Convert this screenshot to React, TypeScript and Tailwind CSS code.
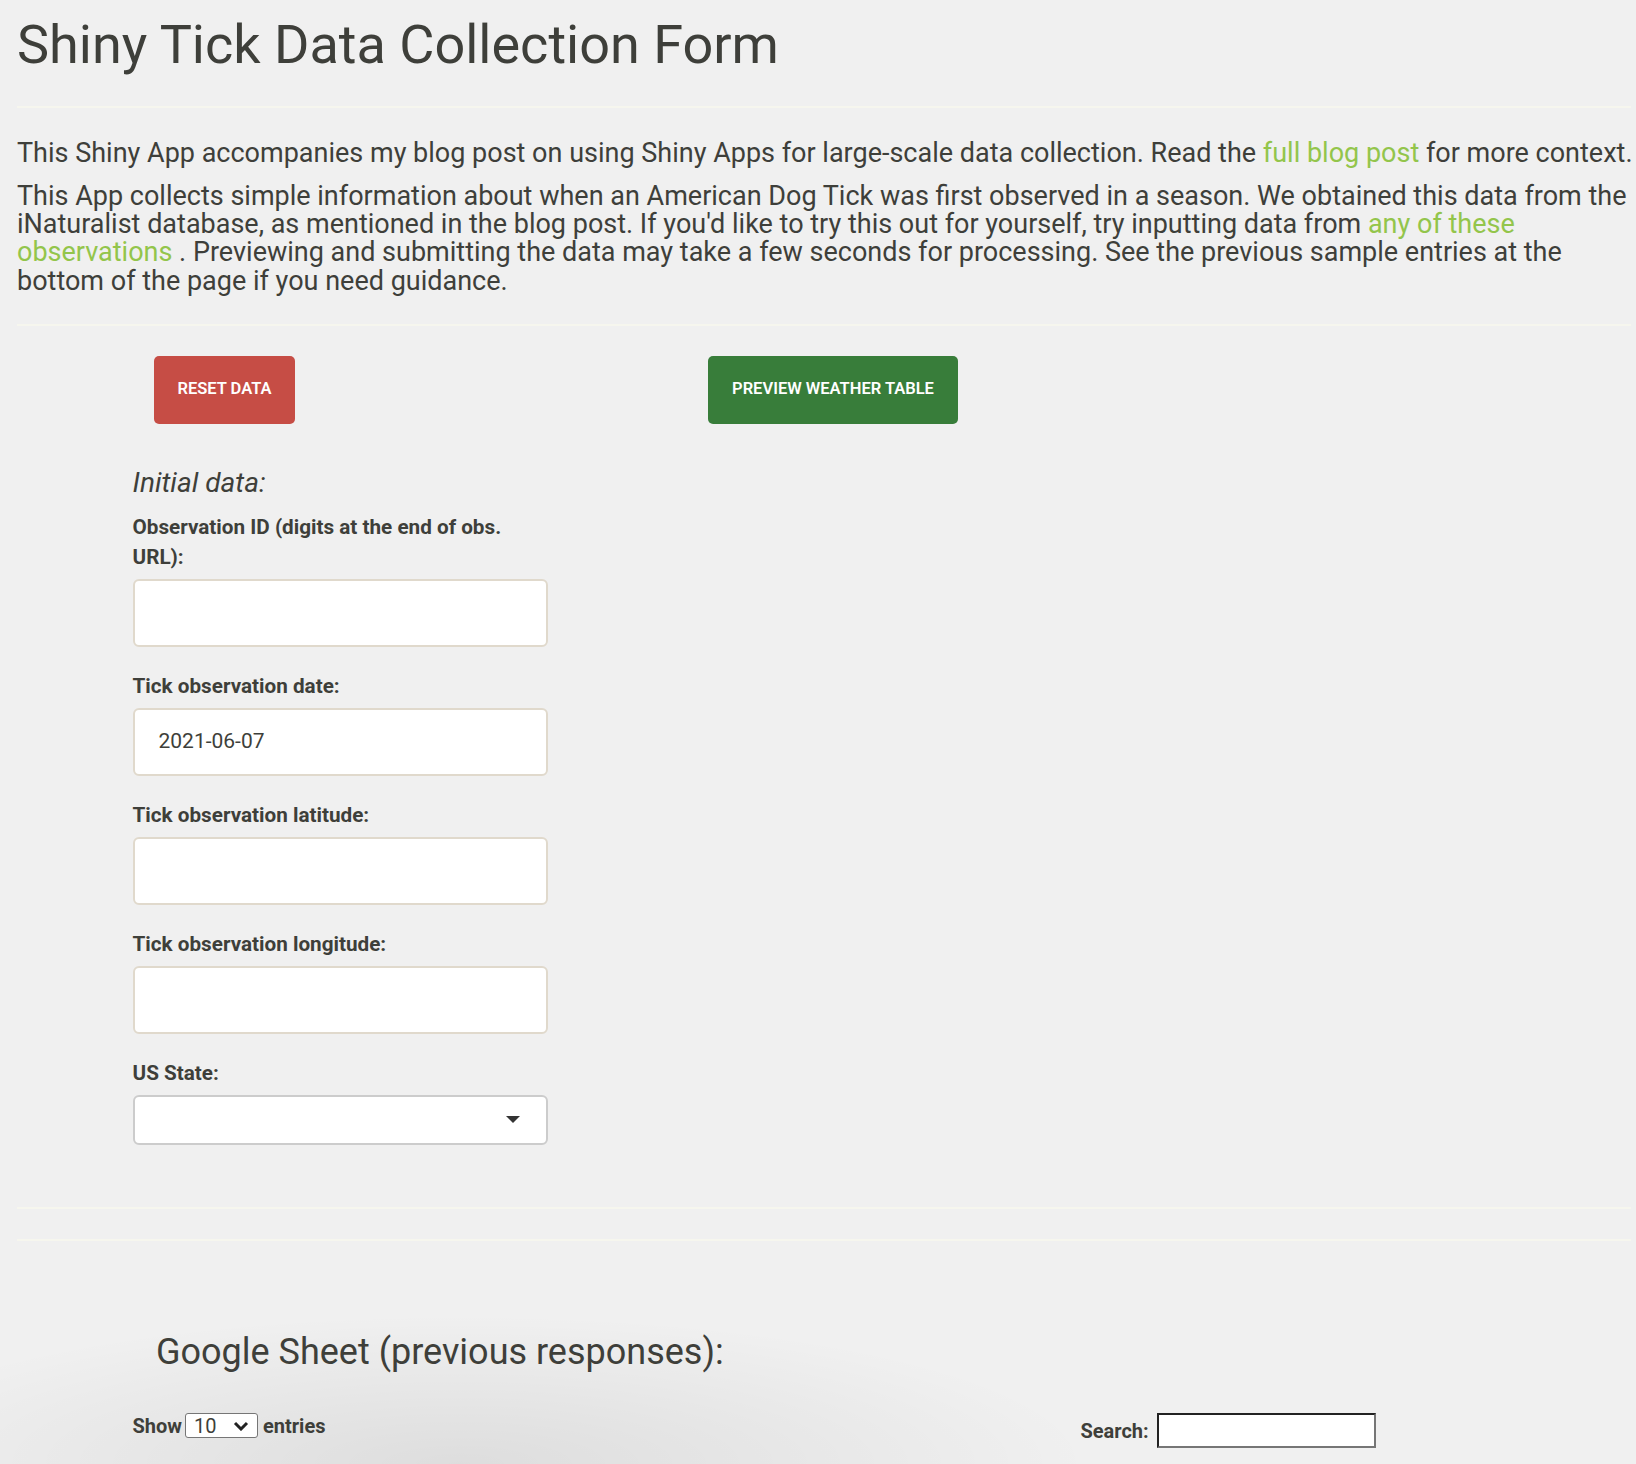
import React from "react";

function Field({ label, children }: { label: React.ReactNode; children: React.ReactNode }) {
  return (
    <div className="mb-[24px]">
      <div className="mb-[7px] text-[20.7px] font-bold leading-[30px]">{label}</div>
      {children}
    </div>
  );
}

function TextBox({ value }: { value?: string }) {
  return (
    <div className="flex h-[68px] w-[415px] items-center rounded-[6px] border-2 border-[#e0d9cc] bg-white pl-[24px] text-[21px] text-[#3e3f3a]">
      {value}
    </div>
  );
}

export default function App() {
  return (
    <div className="relative min-h-[1464px] overflow-hidden bg-[#f0f0f0] font-[Roboto,sans-serif] text-[#3e3f3a]">
      <div className="pointer-events-none absolute bottom-0 left-0 h-[150px] w-[1150px] bg-[radial-gradient(ellipse_55%_100%_at_40%_100%,rgba(0,0,0,0.08),rgba(0,0,0,0)_100%)]" />
      <div className="relative pl-[17px] pr-[5px] pt-[15px]">
        <h1 className="text-[54px] font-normal leading-[59.4px]">Shiny Tick Data Collection Form</h1>
        <div className="mt-[31.5px] h-[2px] bg-[#f6f6ee]" />

        <p className="mt-[30.6px] whitespace-nowrap text-[27px] leading-[28px]">
          This Shiny App accompanies my blog post on using Shiny Apps for large-scale data collection. Read the{" "}
          <span className="text-[#93c54b]">full blog post</span> for more context.
        </p>
        <p className="mt-[15.4px] text-[27px] leading-[28.3px]">
          This App collects simple information about when an American Dog Tick was first observed in a season. We
          obtained this data from the iNaturalist database, as mentioned in the blog post. If you'd like to try this out
          for yourself, try inputting data from <span className="text-[#93c54b]">any of these observations</span> .
          Previewing and submitting the data may take a few seconds for processing. See the previous sample entries at
          the bottom of the page if you need guidance.
        </p>
        <div className="mt-[28.5px] h-[2px] bg-[#f6f6ee]" />

        <div className="mt-[30px] flex">
          <div className="ml-[137px] flex h-[68px] w-[141px] items-center justify-center rounded-[5px] bg-[#c64d45] text-[16.5px] font-semibold uppercase text-white">
            Reset Data
          </div>
          <div className="ml-[413px] flex h-[68px] w-[250px] items-center justify-center rounded-[5px] bg-[#387d3a] text-[16.5px] font-semibold uppercase text-white">
            Preview Weather Table
          </div>
        </div>

        <div className="ml-[115.5px] w-[415px]">
          <h4 className="mt-[44.5px] text-[28px] italic leading-[30px]">Initial data:</h4>
          <div className="mt-[13.7px]">
            <Field label="Observation ID (digits at the end of obs. URL):">
              <TextBox />
            </Field>
            <Field label="Tick observation date:">
              <TextBox value="2021-06-07" />
            </Field>
            <Field label="Tick observation latitude:">
              <TextBox />
            </Field>
            <Field label="Tick observation longitude:">
              <TextBox />
            </Field>
            <div>
              <div className="mb-[7px] text-[20.7px] font-bold leading-[30px]">US State:</div>
              <div className="flex h-[50px] w-[415px] items-center justify-end rounded-[6px] border-2 border-[#cccccc] bg-white pr-[26px]">
                <svg width="14" height="7" viewBox="0 0 14 7">
                  <path d="M0 0 H14 L7 7 Z" fill="#333333" />
                </svg>
              </div>
            </div>
          </div>
        </div>

        <div className="mt-[62px] h-[2px] bg-[#f6f6ee]" />
        <div className="mt-[30px] h-[2px] bg-[#f6f6ee]" />

        <h3 className="ml-[139px] mt-[93px] text-[36px] font-normal leading-[37.4px]">Google Sheet (previous responses):</h3>

        <div className="ml-[115.5px] mt-[42px] flex items-start">
          <div className="flex h-[25px] items-center text-[20px] font-bold">
            <span>Show</span>
            <div className="ml-[3px] flex h-[25px] w-[73px] items-center justify-between rounded-[3px] border-[1.5px] border-[#767676] bg-white pl-[8px] pr-[8px] font-normal">
              <span className="text-[20px] leading-none">10</span>
              <svg width="16" height="10" viewBox="0 0 16 10">
                <path d="M2 2 L8 8 L14 2" fill="none" stroke="#222" strokeWidth="3" />
              </svg>
            </div>
            <span className="ml-[5px]">entries</span>
          </div>
          <div className="ml-[755px] flex items-center text-[20px] font-bold">
            <span>Search:</span>
            <div className="ml-[8px] h-[35px] w-[219px] border-2 border-b-[#767676] border-l-[#222] border-r-[#767676] border-t-[#222] bg-white" />
          </div>
        </div>
      </div>
    </div>
  );
}
